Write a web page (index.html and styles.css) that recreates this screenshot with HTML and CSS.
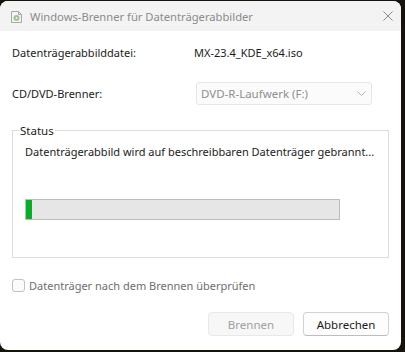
FILE: index.html
```html
<!DOCTYPE html>
<html lang="de">
<head>
<meta charset="UTF-8">
<meta name="viewport" content="width=device-width, initial-scale=1.0">
<title>Windows-Brenner für Datenträgerabbilder</title>
<link rel="stylesheet" href="styles.css">
</head>
<body>
<div class="window">
    <div class="titlebar">
        <svg class="app-icon" width="11" height="12" viewBox="0 0 11 12">
            <path d="M0.5 0.5 H7.5 L10.5 3.5 V11.5 H0.5 Z" fill="#f4f4f4" stroke="#a8a8a8"/>
            <path d="M7.5 0.5 V3.5 H10.5" fill="none" stroke="#a8a8a8"/>
            <circle cx="5.5" cy="7" r="3" fill="#9fc29a"/>
            <circle cx="5.5" cy="7" r="0.9" fill="#f4f4f4"/>
        </svg>
        <span class="title">Windows-Brenner für Datenträgerabbilder</span>
        <svg class="close" width="10" height="10" viewBox="0 0 10 10">
            <path d="M0.5 0.5 L9.5 9.5 M9.5 0.5 L0.5 9.5" stroke="#8a8a8a" stroke-width="1"/>
        </svg>
    </div>

    <div class="content">
        <div class="row file-row">
            <span class="label">Datenträgerabbilddatei:</span>
            <span class="value">MX-23.4_KDE_x64.iso</span>
        </div>
        <div class="row drive-row">
            <span class="label">CD/DVD-Brenner:</span>
            <div class="select">
                <span>DVD-R-Laufwerk (F:)</span>
                <svg width="9" height="5" viewBox="0 0 9 5">
                    <path d="M0.5 0.5 L4.5 4.5 L8.5 0.5" fill="none" stroke="#b4b4b4"/>
                </svg>
            </div>
        </div>

        <fieldset class="status">
            <legend>Status</legend>
            <p class="status-text">Datenträgerabbild wird auf beschreibbaren Datenträger gebrannt...</p>
            <div class="progress">
                <div class="progress-fill" style="width: 2%"></div>
            </div>
        </fieldset>

        <label class="verify">
            <span class="checkbox"></span>
            Datenträger nach dem Brennen überprüfen
        </label>

        <div class="buttons">
            <button class="btn" disabled>Brennen</button>
            <button class="btn">Abbrechen</button>
        </div>
    </div>
</div>
</body>
</html>
```

FILE: styles.css
```css
body {
    margin: 0;
    padding: 0;
    background-color: #15130c;
    font-family: "Noto Sans", "Open Sans", sans-serif;
    font-size: 11px;
    color: #1b1b1b;
    height: 352px;
    overflow: hidden;
}

.window {
    width: 401px;
    height: 349px;
    margin-top: 1px;
    background-color: #ffffff;
    border-radius: 8px;
    overflow: hidden;
}

.titlebar {
    height: 30px;
    background-color: #f3f3f3;
    display: flex;
    align-items: center;
    padding-left: 11px;
    padding-right: 8px;
}

.app-icon {
    margin-top: 2px;
}

.title {
    margin-left: 8px;
    color: #8b8b8b;
    font-size: 11.2px;
    flex: 1;
}

.content {
    padding: 13px 12px 0 12px;
}

.row {
    display: flex;
    align-items: center;
}

.label {
    width: 182px;
}

.file-row {
    height: 16px;
}

.drive-row {
    margin-top: 22px;
    height: 23px;
}

.drive-row .label {
    width: 184px;
}

.select {
    width: 165px;
    height: 21px;
    border: 1px solid #e6e6e6;
    border-radius: 3px;
    background-color: #fbfbfb;
    color: #8f8f8f;
    display: flex;
    align-items: center;
    justify-content: space-between;
    padding: 0 5px 0 4px;
    font-size: 11.5px;
}

.status {
    margin: 18px 0 0 0;
    padding: 0 12px 0 12px;
    border: 1px solid #dcdcdc;
    height: 135px;
    min-width: 0;
    box-sizing: border-box;
    width: 377px;
}

.status legend {
    padding: 0 1px;
    margin-left: -6px;
    font-size: 11.5px;
}

.status-text {
    margin: 6px 0 0 0;
    line-height: 16px;
    white-space: nowrap;
}

.progress {
    margin-top: 39px;
    width: 313px;
    height: 19px;
    border: 1px solid #bcbcbc;
    background-color: #e6e6e6;
}

.progress-fill {
    height: 100%;
    background-color: #06b025;
}

.verify {
    display: flex;
    align-items: center;
    margin-top: 20px;
    color: #6e6e6e;
    height: 14px;
}

.checkbox {
    width: 11px;
    height: 11px;
    border: 1px solid #c2c2c2;
    border-radius: 3px;
    background-color: #fbfbfb;
    margin-right: 4px;
}

.buttons {
    display: flex;
    justify-content: flex-end;
    gap: 9px;
    margin-top: 20px;
}

.btn {
    width: 86px;
    height: 24px;
    font-family: inherit;
    font-size: 11.5px;
    background-color: #fdfdfd;
    color: #1b1b1b;
    border: 1px solid #d2d2d2;
    border-bottom-color: #bdbdbd;
    border-radius: 4px;
    padding: 0;
}

.btn:disabled {
    background-color: #f7f7f7;
    color: #a0a0a0;
    border-color: #e8e8e8;
}
```
